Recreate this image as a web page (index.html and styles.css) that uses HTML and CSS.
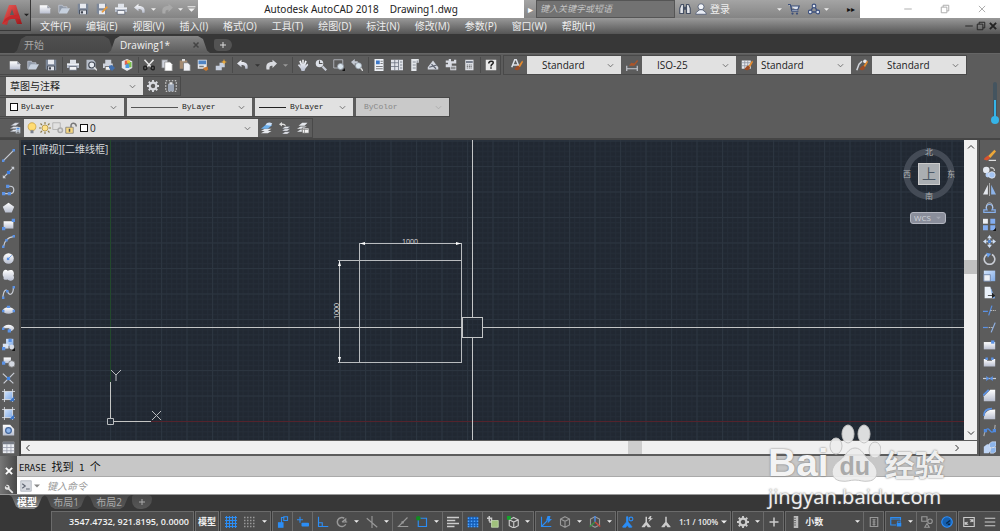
FILE: index.html
```html
<!DOCTYPE html>
<html lang="zh-CN">
<head>
<meta charset="utf-8">
<title>Autodesk AutoCAD 2018 Drawing1.dwg</title>
<link rel="stylesheet" href="styles.css">
</head>
<body>
<svg class="sprite" aria-hidden="true">
  <defs>
    <linearGradient id="silver" x1="0" y1="0" x2="0" y2="1"><stop offset="0" stop-color="#fff"/><stop offset="1" stop-color="#b9bfd0"/></linearGradient>
    <linearGradient id="red" x1="0" y1="0" x2="1" y2="1"><stop offset="0" stop-color="#f0605a"/><stop offset="1" stop-color="#9c1418"/></linearGradient>
    <linearGradient id="blue" x1="0" y1="0" x2="1" y2="1"><stop offset="0" stop-color="#d3e4fb"/><stop offset="1" stop-color="#7fa9e4"/></linearGradient>
  </defs>
  <symbol id="new" viewBox="0 0 16 16"><path d="M1 3h10l4 4v7H1z" fill="url(#silver)"/><path d="M11 3v4h4z" fill="#9aa0ac"/></symbol>
  <symbol id="open" viewBox="0 0 16 16"><path d="M1 13V3h5l1 2h5v2" fill="#8f99a8" stroke="#c4cad6"/><path d="M1 14 5 7h11l-4 7z" fill="#c6d0de"/></symbol>
  <symbol id="save" viewBox="0 0 16 16"><path d="M1 1h14v14H3l-2-2z" fill="#7c8799"/><path d="M4 1h8v6H4z" fill="#e8eaf0"/><path d="M3 9h10v6H3z" fill="#3c424e"/><path d="M4 10h8v5H4z" fill="#dfe2e9"/><path d="M5 11h3v3H5z" fill="#3c424e"/></symbol>
  <symbol id="saveas" viewBox="0 0 16 16"><path d="M1 1h13v14H3l-2-2z" fill="#7c8799"/><path d="M4 1h8v6H4zM4 10h8v5H4z" fill="#e8eaf0"/><path d="m7 12 7-8 2 2-7 7z" fill="#e79a3c"/></symbol>
  <symbol id="print" viewBox="0 0 16 16"><path d="M4 1h8v6H4z" fill="#dfe3ea"/><path d="M0 6h16v6H0z" fill="#b9c0cd"/><path d="M0 6h16v2H0z" fill="#eef0f5"/><path d="M3 10h10v5H3z" fill="#f4f5f8" stroke="#596070"/></symbol>
  <symbol id="undo" viewBox="0 0 16 16"><path d="m0 6 6-5v3c7 0 9 3 8 9h-3c0-4-1-5-5-5v3z" fill="url(#silver)"/></symbol>
  <symbol id="redo" viewBox="0 0 16 16"><path d="m16 6-6-5v3C3 4 1 7 2 14h4c0-4 0-5 4-5v3z" fill="currentColor"/></symbol>
  <symbol id="down" viewBox="0 0 8 8"><path d="M0 2h8L4 6z" fill="currentColor"/></symbol>
  <symbol id="custom" viewBox="0 0 16 16"><path d="M1 3h14v2H1zM2 7h12l-6 6z" fill="#eee"/></symbol>
  <symbol id="preview" viewBox="0 0 16 16"><path d="M2 1h9l3 3v10H2z" fill="#b9c0cc"/><circle cx="9" cy="8" r="4" fill="#e7ebf1" stroke="#424854" stroke-width="1.5"/><path d="m12 11 4 4" stroke="#e6e6e6" stroke-width="2"/></symbol>
  <symbol id="publish" viewBox="0 0 16 16"><path d="M3 1h8v5H3zM0 6h13v6H0z" fill="#cfd4de"/><path d="M3 10h7v5H3z" fill="#f3f3f3" stroke="#555"/><path d="m8 9 4-1 4 4-4 4-4-4z" fill="#426fae"/></symbol>
  <symbol id="globe" viewBox="0 0 16 16"><path d="M1 3 8 0l7 3v9l-7 4-7-4z" fill="#e4e6eb"/><path d="M5 2h6v6H5z" fill="#e2604c"/><path d="M9 4h5v7H9z" fill="#7ac04e"/><path d="M6 7h5v5H6z" fill="#4b9be0"/><path d="M8 2h4v3H8z" fill="#f0c23c"/></symbol>
  <symbol id="cut" viewBox="0 0 16 16"><path d="m2 1 9 10M14 1 5 11" stroke="#e9e9e9" stroke-width="2"/><circle cx="3" cy="12" r="2.300" fill="none" stroke="#222" stroke-width="2"/><circle cx="13" cy="12" r="2.300" fill="none" stroke="#222" stroke-width="2"/></symbol>
  <symbol id="copy" viewBox="0 0 16 16"><path d="M1 1h8v11H1z" fill="#cfd3dc" stroke="#777"/><path d="M5 4h7l3 3v9H5z" fill="#fff" stroke="#888"/></symbol>
  <symbol id="paste" viewBox="0 0 16 16"><path d="M1 2h10v11H1z" fill="#a68c72"/><path d="M4 0h4v3H4z" fill="#ddd"/><path d="M6 5h6l3 3v8H6z" fill="#f0f1f5" stroke="#777"/></symbol>
  <symbol id="match" viewBox="0 0 16 16"><path d="M1 1h12v12H1z" fill="#e5e7ec"/><path d="M2 2h10v5H2z" fill="#4f84c4"/><path d="M3 9h6v2H3z" fill="#777"/><path d="m8 12 6-2 1 4-3 2-3-2z" fill="#c77a32"/></symbol>
  <symbol id="block" viewBox="0 0 16 16"><path d="M1 9h8v6H1zM6 5h7v6H6z" fill="#c6cfdf"/><path d="m12 0 1 3 3 1-3 1-1 3-1-3-3-1 3-1z" fill="#f0ac38"/></symbol>
  <symbol id="pan" viewBox="0 0 16 16"><path d="m1 8 2-1 2 2L3 3l2-1 2 5V1h2v6l2-5 2 1-2 6 3-3 1 2-4 5-1 3H6l-1-3z" fill="url(#silver)"/></symbol>
  <symbol id="zoomrt" viewBox="0 0 16 16"><circle cx="6" cy="6" r="5" fill="#dde1e8"/><path d="M6 2v4h4" stroke="#555" stroke-width="1.500" fill="none"/><path d="m10 10 5 5" stroke="#c9ced9" stroke-width="3"/></symbol>
  <symbol id="zoomwin" viewBox="0 0 16 16"><path d="M1 1h12v11H1z" fill="none" stroke="#c3c7cf"/><circle cx="10" cy="10" r="4" fill="#d9e4ec" stroke="#8b929f"/><path d="M16 12v4h-4z" fill="#111"/></symbol>
  <symbol id="zoomprev" viewBox="0 0 16 16"><path d="m0 4 5-4v3h4v3H5v3z" fill="#c2c7d1"/><circle cx="10" cy="9" r="4" fill="#dae6ee" stroke="#9aa2ae"/><path d="m13 12 3 4" stroke="#d8d8d8" stroke-width="2"/></symbol>
  <symbol id="props" viewBox="0 0 16 16"><path d="M2 0h12v16H2z" fill="#edf0f5"/><path d="M4 2h5v5H4z" fill="#3d78c8"/><path d="M10 3h3M10 6h3M4 10h9M4 13h9" stroke="#555"/></symbol>
  <symbol id="design" viewBox="0 0 16 16"><path d="M0 1h16v14H0z" fill="#dfe2e8"/><path d="M5 1v14M10 1v14M0 5h10M0 10h10M12 4h3M12 8h3M12 12h3" stroke="#646b79"/></symbol>
  <symbol id="palette" viewBox="0 0 16 16"><path d="M3 0h10v5h-3v11H3z" fill="#e3e6ea"/><path d="M5 4h4M5 8h4M5 12h4M11 2v3" stroke="#6a6f79"/></symbol>
  <symbol id="sheet" viewBox="0 0 16 16"><path d="m1 11 7-9 3 4 4 5v3H1z" fill="#d2d6df"/><path d="m3 11 10-3M6 7l6 6" stroke="#5b616e" stroke-width="1.500"/></symbol>
  <symbol id="markup" viewBox="0 0 16 16"><path d="M1 2h4V0h3v3h4V1h3v5H9v3h6v6H7v-4H1V7h3V5H1z" fill="#d9dce4"/><path d="M8 11h6M8 13h6" stroke="#555"/></symbol>
  <symbol id="calc" viewBox="0 0 16 16"><path d="M3 1h11v14H3z" fill="#dcdfe5"/><path d="M4 3h9v2H4z" fill="#596070"/><path d="M5 8h7M5 10h7M5 12h7" stroke="#555" stroke-dasharray="2 1"/></symbol>
  <symbol id="help" viewBox="0 0 16 16"><path d="M1 1h14v14H1z" fill="#e8e8e8"/><path d="M5 6c0-4 6-4 6-1 0 2-3 2-3 5" fill="none" stroke="#222" stroke-width="2"/><path d="M7 11h2v2H7z" fill="#222"/></symbol>
  <symbol id="brush" viewBox="0 0 16 16"><path d="m10 9 5-7 1 2-4 7z" fill="#e58a2c"/><path d="M5 12c2 0 2-4 5-3l2 2c0 4-4 5-7 3z" fill="#9c4c26"/></symbol>
  <symbol id="textstyle" viewBox="0 0 16 16"><path d="m1 11 4-10h2l4 10M3 8h6" fill="none" stroke="#dde1e8" stroke-width="2"/><use href="#brush"/></symbol>
  <symbol id="dimstyle" viewBox="0 0 16 16"><path d="M1 9v7M15 9v7M1 13h14" stroke="#c8ccd4" stroke-width="1.500"/><path d="m4 9 3-4 4 1 4-5 1 2-5 6z" fill="#ab552a"/></symbol>
  <symbol id="tablestyle" viewBox="0 0 16 16"><path d="M1 2h12v11H1z" fill="#e7e9ee"/><path d="M5 2v11M9 2v11M1 5h12M1 9h12" stroke="#8a8f9b"/><use href="#brush"/></symbol>
  <symbol id="leaderstyle" viewBox="0 0 16 16"><path d="m1 15 3-8 4-4" fill="none" stroke="#cfd3da" stroke-width="2"/><circle cx="12" cy="3" r="2.500" fill="#e6e8ed"/><use href="#brush"/></symbol>
  <symbol id="gear" viewBox="0 0 16 16"><circle cx="8" cy="8" r="4.500" fill="none" stroke="currentColor" stroke-width="3"/><path d="M8 0v3M8 13v3M0 8h3M13 8h3M2.300 2.300l2 2M11.700 11.700l2 2M2.300 13.700l2-2M11.700 4.300l2-2" stroke="currentColor" stroke-width="2.500"/></symbol>
  <symbol id="wsave" viewBox="0 0 16 16"><path d="M1 1h14v14H1z" fill="none" stroke="#ddd" stroke-width="1.500" stroke-dasharray="2 2"/><path d="M4 5h8v10H4z" fill="#9ba5b5"/><path d="M6 3h4v3H6z" fill="#e5e5e5"/></symbol>
  <symbol id="layers" viewBox="0 0 16 16"><path d="m2 5 6-4h6l-5 4zM1 9l5-3h7l-5 3zM1 13l5-3h7l-5 3z" fill="#e1e4ea" stroke="#5a5f69" stroke-width=".5"/><path d="M9 7h6v8H9z" fill="#dce8f7"/><path d="M10 8h4v2h-4z" fill="#4e8edb"/><path d="M10 12h4M10 14h4" stroke="#555"/></symbol>
  <symbol id="laycur" viewBox="0 0 16 16"><path d="m0 15 5-3h9l-5 3zM0 12l5-3h9l-5 3z" fill="#e5e8ed"/><path d="m0 9 6-5h9l-6 5z" fill="#6eb0ec"/><path d="M6 4c2-4 6-4 9-2l-2 3z" fill="#cce0f8"/></symbol>
  <symbol id="layprev" viewBox="0 0 16 16"><path d="m0 3 4-3v2c4 0 5 1 5 4C7 4 6 4 4 4v2z" fill="#ddd"/><path d="m4 9 4-3h7l-4 3zM4 12l4-3h7l-4 3zM4 16l4-3h7l-4 3z" fill="#e9ebef" stroke="#4f545e" stroke-width=".5"/></symbol>
  <symbol id="laystate" viewBox="0 0 16 16"><path d="m2 5 5-4h7l-4 4zM0 9l5-3h8l-5 3zM0 13l5-3h8l-5 3z" fill="#e4e7ec"/><path d="M7 8h9v7H7z" fill="#f2f2f2" stroke="#555"/><path d="M8 10h7M10 9v6" stroke="#888"/></symbol>
  <symbol id="bulb" viewBox="0 0 16 16"><path d="M5 11C1 7 3 1 8 1s7 6 3 10z" fill="#ffdc73" stroke="#c79b35"/><path d="M6 11h4v4H6z" fill="#7b8291"/></symbol>
  <symbol id="sun" viewBox="0 0 16 16"><circle cx="8" cy="8" r="4" fill="#ffe28a" stroke="#a98b3d"/><path d="M8 0v3M8 13v3M0 8h3M13 8h3M2 2l2 2M12 12l2 2M2 14l2-2M12 4l2-2" stroke="#8b7a4b" stroke-width="1.500"/></symbol>
  <symbol id="vpfreeze" viewBox="0 0 16 16"><path d="M1 1h10v9H1z" fill="none" stroke="#aaa"/><circle cx="11" cy="11" r="3" fill="#ddd" stroke="#aaa" stroke-width="2"/></symbol>
  <symbol id="unlock" viewBox="0 0 16 16"><path d="M8 8V5c0-5 7-4 7 1" fill="none" stroke="#777" stroke-width="2"/><path d="M1 7h10v8H1z" fill="#f6d781" stroke="#777"/><path d="M6 9v4" stroke="#555" stroke-width="2"/></symbol>
  <symbol id="binoc" viewBox="0 0 16 16"><path d="M1 14V7l2-5h3v12zM15 14V7l-2-5h-3v12z" fill="#e3e5ea" stroke="#465064" stroke-width="1.500"/><path d="M6 5h4v4H6z" fill="#465064"/></symbol>
  <symbol id="user" viewBox="0 0 16 16"><circle cx="8" cy="5" r="4" fill="#f4f6fa" stroke="#46526b"/><path d="M1 15c0-4 3-3 5-6h4c2 3 5 2 5 6z" fill="#e9edf5" stroke="#46526b"/></symbol>
  <symbol id="cart" viewBox="0 0 16 16"><path d="M0 2h3l2 9h9M4 4h11l-2 5H5z" fill="#dce3ef" stroke="#3b4e79" stroke-width="1.500"/><circle cx="6" cy="14" r="1.500" fill="#3b4e79"/><circle cx="12" cy="14" r="1.500" fill="#3b4e79"/></symbol>
  <symbol id="a360" viewBox="0 0 16 16"><path d="M8 3 3 12h10z" fill="none" stroke="#3f527f" stroke-width="2"/><g fill="#dfe6f2" stroke="#3f527f" stroke-width="1.500"><circle cx="8" cy="4" r="2.500"/><circle cx="3" cy="12" r="2.500"/><circle cx="13" cy="12" r="2.500"/></g></symbol>
  <symbol id="min" viewBox="0 0 16 16"><path d="M2 8h12" stroke="currentColor" stroke-width="1.500"/></symbol>
  <symbol id="restore" viewBox="0 0 16 16"><path d="M2 5h9v9H2zM5 5V2h9v9h-3" fill="none" stroke="currentColor" stroke-width="1.500"/></symbol>
  <symbol id="close" viewBox="0 0 16 16"><path d="m3 3 10 10M13 3 3 13" stroke="currentColor" stroke-width="1.500"/></symbol>
  <symbol id="closeb" viewBox="0 0 16 16"><path d="m3 3 10 10M13 3 3 13" stroke="currentColor" stroke-width="3"/></symbol>
  <symbol id="plus" viewBox="0 0 16 16"><path d="M8 2v12M2 8h12" stroke="currentColor" stroke-width="2"/></symbol>
  <symbol id="chev" viewBox="0 0 16 16"><path d="m2 5 6 6 6-6" fill="none" stroke="currentColor" stroke-width="2"/></symbol>
  <symbol id="line" viewBox="0 0 16 16"><path d="M2 14 14 2" stroke="#c9cdd5" stroke-width="1.500"/><path d="M0 13h3v3H0zM13 0h3v3h-3z" fill="#5b92e5"/></symbol>
  <symbol id="xline" viewBox="0 0 16 16"><path d="M2 14 14 2" stroke="#c9cdd5" stroke-width="1.500"/><path d="M6 6h4v4H6z" fill="#3f82e8"/><path d="M11 1h4v4zM1 11v4h4z" fill="#c9cdd5"/></symbol>
  <symbol id="pline" viewBox="0 0 16 16"><path d="M2 13h8c6 0 6-9 0-9H5" fill="none" stroke="#c9cdd5" stroke-width="1.500"/><path d="M0 11h4v4H0zM7 11h4v4H7zM5 2h4v4H5z" fill="#5b92e5"/></symbol>
  <symbol id="polygon" viewBox="0 0 16 16"><path d="m8 2 7 5-3 7H4L1 7z" fill="url(#silver)"/></symbol>
  <symbol id="rect" viewBox="0 0 16 16"><path d="M2 4h12v9H2z" fill="url(#silver)"/><path d="M0 11h4v4H0zM12 1h4v4h-4z" fill="#5b92e5"/></symbol>
  <symbol id="arc" viewBox="0 0 16 16"><path d="M2 14C3 7 7 3 14 2" fill="none" stroke="#c9cdd5" stroke-width="1.500"/><path d="M0 13h3v3H0zM4 5h3v3H4zM13 0h3v3h-3z" fill="#5b92e5"/></symbol>
  <symbol id="circle" viewBox="0 0 16 16"><circle cx="8" cy="8" r="6.500" fill="url(#silver)"/><path d="m8 8 4-4" stroke="#5b92e5"/><path d="M6 7h3v3H6z" fill="#5b92e5"/></symbol>
  <symbol id="revcloud" viewBox="0 0 16 16"><path d="M2 2c2-2 4-1 5 0 3-1 6-1 7 1 1 2 1 4 0 5 2 3 0 6-2 6-2 1-4 0-5-1-3 1-6 0-5-3-2-3-1-6 0-8z" fill="url(#silver)"/></symbol>
  <symbol id="spline" viewBox="0 0 16 16"><path d="M1 14C2 5 5 3 7 7c2 6 7 3 7-5" fill="none" stroke="#c9cdd5" stroke-width="1.500"/><path d="M0 13h3v3H0zM5 5h3v3H5zM13 0h3v3h-3z" fill="#5b92e5"/></symbol>
  <symbol id="ellipse" viewBox="0 0 16 16"><ellipse cx="8" cy="8" rx="7" ry="4" fill="url(#silver)"/><path d="M0 7h3v3H0zM6 2h4v3H6zM13 7h3v3h-3z" fill="#5b92e5"/></symbol>
  <symbol id="ellarc" viewBox="0 0 16 16"><path d="M1 9c1-6 13-6 14 0-1 3-4 4-6 4V9z" fill="url(#silver)"/><path d="M0 8h3v3H0zM7 10h4v4H7z" fill="#5b92e5"/></symbol>
  <symbol id="insert" viewBox="0 0 16 16"><path d="M5 1h9v9H5z" fill="url(#blue)"/><circle cx="12" cy="11" r="3" fill="#d7dce6"/><path d="M1 7h7v6H1z" fill="#dce4f1"/><path d="M0 11h4v4H0zM8 1h4v4H8z" fill="#5b92e5"/><path d="M16 12v4h-4z" fill="#111"/></symbol>
  <symbol id="makeblk" viewBox="0 0 16 16"><path d="M2 3h9v7H2z" fill="url(#silver)"/><circle cx="12" cy="11" r="4" fill="#d5d9e2" stroke="#777"/><path d="M0 8h4v4H0z" fill="#5b92e5"/></symbol>
  <symbol id="point" viewBox="0 0 16 16"><path d="M2 14 15 1M1 2l13 12" stroke="#c9cdd5" stroke-width="1.500"/><path d="M6 6h4v4H6z" fill="#4587e4"/></symbol>
  <symbol id="hatch" viewBox="0 0 16 16"><path d="M3 3h10v10H3z" fill="url(#blue)"/><path d="M0 3h16M0 13h16M3 0v16M13 0v16" stroke="#e0e4eb"/><path d="m9 15 6-6v6z" fill="#3b73c4"/></symbol>
  <symbol id="region" viewBox="0 0 16 16"><path d="M1 1h9l5 5v8H1z" fill="url(#silver)"/><circle cx="8" cy="8" r="3.500" fill="#8eb5ea" stroke="#43669b" stroke-width="1.500"/></symbol>
  <symbol id="table" viewBox="0 0 16 16"><path d="M1 1h14v14H1z" fill="#eceef3"/><path d="M1 1h14v3H1z" fill="#777c86"/><path d="M6 4v11M11 4v11M1 8h14M1 12h14" stroke="#989dab"/></symbol>
  <symbol id="erase" viewBox="0 0 16 16"><path d="m6 9 8-8 2 2-7 8z" fill="#eda839"/><path d="m2 11 4-3 3 3-4 3-4-1z" fill="#d9532f"/><path d="M7 14h9" stroke="#ddd" stroke-width="1.500"/></symbol>
  <symbol id="mcopy" viewBox="0 0 16 16"><circle cx="4" cy="5" r="4" fill="#e5e9f0"/><circle cx="6" cy="11" r="3" fill="#b7cff2"/><circle cx="11" cy="11" r="4" fill="#a4c4f2" stroke="#e4e8ef"/><path d="M9 2c4 0 5 1 5 4" fill="none" stroke="#ddd" stroke-width="1.500"/></symbol>
  <symbol id="mirror" viewBox="0 0 16 16"><path d="M6 2v12H0z" fill="#e4e7ed"/><path d="M10 2v12h6z" fill="#8db3e8"/><path d="M8 0v16" stroke="#bbb"/></symbol>
  <symbol id="offset" viewBox="0 0 16 16"><path d="M1 14v-3h4C0 2 16 2 11 11h4v3z" fill="none" stroke="#86afeb" stroke-width="1.500"/><path d="M4 9C3 0 13 0 12 9" fill="none" stroke="#cbd3df"/></symbol>
  <symbol id="array" viewBox="0 0 16 16"><path d="M0 1h6v6H0z" fill="#eef0f4"/><path d="M9 1h6v6H9zM0 9h6v6H0zM9 9h6v6H9z" fill="#83adf0"/><path d="M16 12v4h-4z" fill="#111"/></symbol>
  <symbol id="move" viewBox="0 0 16 16"><path d="m8 0 3 4H5zM8 16l3-4H5zM0 8l4-3v6zM16 8l-4-3v6z" fill="#cfe0f7"/><path d="M8 4v8M4 8h8" stroke="#c9ced8" stroke-width="2"/><path d="M6 6h4v4H6z" fill="#4c7fc7"/></symbol>
  <symbol id="rotate" viewBox="0 0 16 16"><path d="M5 3a6.500 6.500 0 1 0 6 0" fill="none" stroke="#c9cdd5" stroke-width="2"/><path d="m4 1 6 1-4 5z" fill="#67a0ef"/></symbol>
  <symbol id="scale" viewBox="0 0 16 16"><path d="M1 2h14v13H1z" fill="url(#blue)"/><path d="M1 7h8v8H1z" fill="#eef0f5" stroke="#667ba1"/></symbol>
  <symbol id="stretch" viewBox="0 0 16 16"><path d="M2 1h7l5 14H2z" fill="#eaf1fa"/><path d="m9 1 6 14h-3z" fill="#78a9e9"/><path d="M6 11h5V8l4 4-4 3v-3H6z" fill="#222"/></symbol>
  <symbol id="trim" viewBox="0 0 16 16"><path d="M7 14 11 2M0 9h6" stroke="#5b92e5" stroke-width="1.500"/><path d="M9 8h7" stroke="#ccc" stroke-dasharray="2 1"/></symbol>
  <symbol id="extend" viewBox="0 0 16 16"><path d="m10 14 5-12" stroke="#8fb1e4" stroke-width="1.500"/><path d="M0 8h6" stroke="#5b92e5" stroke-width="1.500"/><path d="M7 8h5" stroke="#ccc" stroke-dasharray="2 1"/></symbol>
  <symbol id="breakpt" viewBox="0 0 16 16"><path d="M1 5h14v9H1z" fill="url(#silver)"/><path d="M10 3h4v4h-4z" fill="#5b92e5"/></symbol>
  <symbol id="break" viewBox="0 0 16 16"><path d="M1 5h4v2h6V5h4v9H1z" fill="url(#silver)"/><path d="M3 3h3v3H3zM10 3h3v3h-3z" fill="#5b92e5"/></symbol>
  <symbol id="join" viewBox="0 0 16 16"><path d="M0 8h16" stroke="#c9cdd5" stroke-width="1.500"/><path d="m4 5 4 3-4 3zM12 5 8 8l4 3z" fill="#5b92e5"/></symbol>
  <symbol id="chamfer" viewBox="0 0 16 16"><path d="m1 9 8-8h6v14H1z" fill="url(#silver)"/><path d="m0 8 7-7" stroke="#5b92e5" stroke-width="2"/></symbol>
  <symbol id="fillet" viewBox="0 0 16 16"><path d="M1 15c0-8 4-12 14-12v12z" fill="url(#silver)"/><path d="M1 11c0-6 4-9 10-9" fill="none" stroke="#5b92e5" stroke-width="2"/></symbol>
  <symbol id="blend" viewBox="0 0 16 16"><path d="M1 15 3 7M14 8l1-7" stroke="#aaa" stroke-width="1.500"/><path d="M3 8c5-7 6 7 11 0" fill="none" stroke="#4f8ae0" stroke-width="1.500"/><path d="M1 6h4v4H1zM12 6h4v4h-4z" fill="#4f8ae0"/></symbol>
  <symbol id="explode" viewBox="0 0 16 16"><path d="m1 7 4-3h5v7l-3 4H1z" fill="#bfd5f5"/><path d="m8 3 3-2h5v5l-3 2H8zM9 10l3-2h4v5l-3 2H9z" fill="#8cb4ea" stroke="#e2ebf8" stroke-width=".7"/></symbol>
  <symbol id="wrench" viewBox="0 0 16 16"><path d="M3 2c3-2 7 1 6 5l6 6-2 2-6-6C3 10 0 7 2 3l3 3 2-2z" fill="#e5e5e5"/></symbol>
  <symbol id="prompt" viewBox="0 0 16 16"><path d="M1 1h14v14H1z" fill="#d7dae0" stroke="#a8adb6"/><path d="m3 5 4 3-4 3M8 12h5" fill="none" stroke="#5e6571" stroke-width="1.500"/></symbol>
  <symbol id="sgrid" viewBox="0 0 16 16"><path d="M2 0v16M6 0v16M10 0v16M14 0v16M0 2h16M0 6h16M0 10h16M0 14h16" stroke="currentColor" stroke-width="1.500"/></symbol>
  <symbol id="sdots" viewBox="0 0 16 16"><path d="M0 2h16M0 6h16M0 10h16M0 14h16" stroke="currentColor" stroke-width="2" stroke-dasharray="2 2"/></symbol>
  <symbol id="infer" viewBox="0 0 16 16"><path d="M2 9h6v6H2zM9 1h5v5H9zM6 9V2h4" fill="none" stroke="currentColor" stroke-width="1.500"/><path d="M2 9h6v6H2z" fill="currentColor"/></symbol>
  <symbol id="dyn" viewBox="0 0 16 16"><path d="M4 1v8M0 5h8" stroke="currentColor" stroke-width="1.500"/><rect x="6" y="9" width="10" height="5" rx="1" fill="currentColor"/></symbol>
  <symbol id="ortho" viewBox="0 0 16 16"><path d="M2 1v13h13M2 9h5v5" fill="none" stroke="currentColor" stroke-width="1.500"/></symbol>
  <symbol id="polar" viewBox="0 0 16 16"><path d="M13 11A6 6 0 1 1 11 3" fill="none" stroke="currentColor" stroke-width="2"/><path d="M8 8h7M8 8l5-4v4" fill="none" stroke="currentColor" stroke-width="1.500"/></symbol>
  <symbol id="iso" viewBox="0 0 16 16"><path d="m1 3 14 12M8 0v16" stroke="currentColor" stroke-width="1.500"/></symbol>
  <symbol id="otrack" viewBox="0 0 16 16"><path d="M15 14H2L14 2" fill="none" stroke="currentColor" stroke-width="1.500"/><path d="M6 7h3v3H6z" fill="currentColor"/></symbol>
  <symbol id="osnap" viewBox="0 0 16 16"><path d="M3 3h11v11H3z" fill="none" stroke="currentColor" stroke-width="1.500"/><circle cx="3" cy="3" r="3" fill="#108c20"/></symbol>
  <symbol id="lwt" viewBox="0 0 16 16"><path d="M0 2h16M0 6h11M0 10h16M0 14h10" stroke="currentColor" stroke-width="2"/></symbol>
  <symbol id="trans" viewBox="0 0 16 16"><path d="M1 1h14v14H1z" fill="#155cb4"/><path d="M1 3h14M1 7h14M1 11h14M1 14h14" stroke="#4da2ff" stroke-width="2" stroke-dasharray="2 2"/></symbol>
  <symbol id="cycle" viewBox="0 0 16 16"><path d="M0 3h7M3 0v7M6 3v5H3" fill="none" stroke="#ccc" stroke-width="2"/><path d="M6 6h9v9H6z" fill="#a0c17c" stroke="#c8ddb5"/></symbol>
  <symbol id="cube" viewBox="0 0 16 16"><path d="m8 1 6 3v8l-6 3-6-3V4zM2 4l6 3 6-3M8 7v8" fill="none" stroke="currentColor" stroke-width="1.500"/></symbol>
  <symbol id="cubesnap" viewBox="0 0 16 16"><path d="m9 2 6 3v8l-6 3-6-3V5zM3 5l6 3 6-3M9 8v8" fill="none" stroke="#ccc" stroke-width="1.500"/><path d="M0 0h5v5H0z" fill="#13a42b"/></symbol>
  <symbol id="ducs" viewBox="0 0 16 16"><path d="M2 1v13h13M2 14l8-8" fill="none" stroke="currentColor" stroke-width="1.500"/><path d="m10 0-2 6h3l-1 4 6-6h-3l1-4z" fill="currentColor"/></symbol>
  <symbol id="gizmo" viewBox="0 0 16 16"><path d="m8 1 6 3v8l-6 3-6-3V4z" fill="none" stroke="#999" stroke-width="1.500"/><path d="M8 0v8" stroke="#4b88e0" stroke-width="2"/><path d="m8 8-7 6" stroke="#3c9244" stroke-width="2"/><path d="m8 8 7 6" stroke="#cb493c" stroke-width="2"/></symbol>
  <symbol id="ann" viewBox="0 0 16 16"><path d="M7 1h2v7l5 6v1h-4l-2-3-2 3H2v-1l5-6z" fill="currentColor"/></symbol>
  <symbol id="annvis" viewBox="0 0 16 16"><path d="M6 1h2v7l5 6v1H9l-2-3-2 3H1v-1l5-6z" fill="currentColor" stroke="currentColor"/><circle cx="12" cy="4" r="2.500" fill="none" stroke="currentColor" stroke-width="1.500"/></symbol>
  <symbol id="annauto" viewBox="0 0 16 16"><path d="M6 1h2v7l5 6v1H9l-2-3-2 3H1v-1l5-6z" fill="currentColor"/><path d="m12 0-3 4h3l-2 4 6-5h-3l1-3z" fill="currentColor"/></symbol>
  <symbol id="ruler" viewBox="0 0 16 16"><path d="M5 0h6v16H5z" fill="#bbb"/><path d="M5 3h3M5 6h3M5 9h3M5 12h3" stroke="#555"/></symbol>
  <symbol id="quick" viewBox="0 0 16 16"><path d="M3 2h10v12H3zM6 5h4M6 8h4M6 11h4M8 5v8" fill="none" stroke="currentColor" stroke-width="1.500"/></symbol>
  <symbol id="lockui" viewBox="0 0 16 16"><path d="M8 12H1V2h13v4M1 4h13" fill="none" stroke="currentColor" stroke-width="1.500"/><path d="M9 9h6v5H9z" fill="currentColor"/><path d="M10 9V7h4v2" fill="none" stroke="currentColor"/></symbol>
  <symbol id="isolate" viewBox="0 0 16 16"><path d="M1 1h7v6H1zM5 15l3-5 3 5z" fill="none" stroke="currentColor" stroke-width="1.500"/><circle cx="12" cy="7" r="3" fill="none" stroke="currentColor" stroke-width="1.500"/></symbol>
  <symbol id="perf" viewBox="0 0 16 16"><circle cx="8" cy="8" r="7" fill="#155fae" stroke="#2e91ff" stroke-width="1.500"/><path d="m7 10 5-4M9 11h3" stroke="#06294e" stroke-width="2"/></symbol>
  <symbol id="clean" viewBox="0 0 16 16"><path d="M1 2h14v12H1zM9 5h4v3M7 11H3V8M3 11l3-3M13 5l-3 3" fill="none" stroke="currentColor" stroke-width="1.500"/></symbol>
  <symbol id="menu" viewBox="0 0 16 16"><path d="M1 3h14M1 8h14M1 13h14" stroke="currentColor" stroke-width="1.500"/></symbol>
</svg>

<header class="head">
  <button class="logo" aria-label="应用程序菜单">
    <svg class="logo-a" viewBox="0 0 20 22"><path d="M0 20 7 1h7l6 19h-5l-2-5H7l-2 6z" fill="url(#red)"/><path d="m8 11 2-6 2 6z" fill="#5d5d5d"/><path d="M3 15c5-4 9-4 14-4l1 4C12 13 7 15 0 20z" fill="#c6282c"/></svg>
    <svg class="s6"><use href="#down"/></svg>
  </button>
  <div class="titlebar">
    <div class="quick">
      <button aria-label="新建"><svg><use href="#new"/></svg></button>
      <button aria-label="打开"><svg><use href="#open"/></svg></button>
      <button aria-label="保存"><svg><use href="#save"/></svg></button>
      <button aria-label="另存为"><svg><use href="#saveas"/></svg></button>
      <button aria-label="打印"><svg><use href="#print"/></svg></button>
      <button aria-label="放弃"><svg><use href="#undo"/></svg></button>
      <button class="drop" aria-label="放弃列表"><svg><use href="#down"/></svg></button>
      <button class="dim" aria-label="重做"><svg><use href="#redo"/></svg></button>
      <button class="drop" aria-label="重做列表"><svg><use href="#down"/></svg></button>
      <button class="tail" aria-label="自定义"><svg><use href="#custom"/></svg></button>
    </div>
    <h1 class="title"><span>Autodesk AutoCAD 2018</span><span>Drawing1.dwg</span></h1>
    <div class="info">
      <button class="expand" aria-label="展开搜索">▸</button>
      <input class="search" type="text" aria-label="搜索" placeholder="键入关键字或短语">
      <button class="ico" aria-label="搜索帮助"><svg><use href="#binoc"/></svg></button>
      <button class="login"><svg><use href="#user"/></svg>登录</button>
      <button class="drop" aria-label="登录选项"><svg><use href="#down"/></svg></button>
      <button class="ico" aria-label="应用商店"><svg><use href="#cart"/></svg></button>
      <button class="ico" aria-label="A360"><svg><use href="#a360"/></svg></button>
      <button class="drop near" aria-label="A360 选项"><svg><use href="#down"/></svg></button>
      <button class="more" aria-label="更多">▸▸</button>
    </div>
    <div class="winctl">
      <button aria-label="最小化"><svg><use href="#min"/></svg></button>
      <button aria-label="还原"><svg><use href="#restore"/></svg></button>
      <button aria-label="关闭"><svg><use href="#close"/></svg></button>
    </div>
  </div>
  <nav class="menubar">
    <a href="#file">文件(F)</a><a href="#edit">编辑(E)</a><a href="#view">视图(V)</a><a href="#ins">插入(I)</a><a href="#format">格式(O)</a><a href="#tools">工具(T)</a><a href="#draw">绘图(D)</a><a href="#dim">标注(N)</a><a href="#modify">修改(M)</a><a href="#param">参数(P)</a><a href="#window">窗口(W)</a><a href="#helpmenu">帮助(H)</a>
    <div class="docctl">
      <button aria-label="最小化图形"><svg><use href="#min"/></svg></button>
      <button aria-label="还原图形"><svg><use href="#restore"/></svg></button>
      <button aria-label="关闭图形"><svg><use href="#closeb"/></svg></button>
    </div>
  </nav>
</header>

<div class="filetabs">
  <button class="ftab">开始</button>
  <button class="ftab on">Drawing1*<svg class="s8"><use href="#closeb"/></svg></button>
  <button class="fadd" aria-label="新图形"><svg class="s8"><use href="#plus"/></svg></button>
</div>

<div class="bars">
  <div class="barrow">
    <div class="bar std">
      <button aria-label="新建"><svg><use href="#new"/></svg></button><button aria-label="打开"><svg><use href="#open"/></svg></button><button aria-label="保存"><svg><use href="#save"/></svg></button><i></i>
      <button aria-label="打印"><svg><use href="#print"/></svg></button><button aria-label="打印预览"><svg><use href="#preview"/></svg></button><button aria-label="发布"><svg><use href="#publish"/></svg></button><button aria-label="三维打印"><svg><use href="#globe"/></svg></button><i></i>
      <button aria-label="剪切"><svg><use href="#cut"/></svg></button><button aria-label="复制"><svg><use href="#copy"/></svg></button><button aria-label="粘贴"><svg><use href="#paste"/></svg></button><button aria-label="特性匹配"><svg><use href="#match"/></svg></button><button aria-label="块编辑器"><svg><use href="#block"/></svg></button><i></i>
      <button aria-label="放弃"><svg><use href="#undo"/></svg></button><button class="drop dark" aria-label="放弃列表"><svg><use href="#down"/></svg></button><button class="lite" aria-label="重做"><svg><use href="#redo"/></svg></button><button class="drop grey" aria-label="重做列表"><svg><use href="#down"/></svg></button><i></i>
      <button aria-label="平移"><svg><use href="#pan"/></svg></button><button aria-label="实时缩放"><svg><use href="#zoomrt"/></svg></button><button aria-label="窗口缩放"><svg><use href="#zoomwin"/></svg></button><button aria-label="缩放上一个"><svg><use href="#zoomprev"/></svg></button><i></i>
      <button aria-label="特性"><svg><use href="#props"/></svg></button><button aria-label="设计中心"><svg><use href="#design"/></svg></button><button aria-label="工具选项板"><svg><use href="#palette"/></svg></button><button aria-label="图纸集"><svg><use href="#sheet"/></svg></button><button aria-label="标记集"><svg><use href="#markup"/></svg></button><button aria-label="计算器"><svg><use href="#calc"/></svg></button><i></i>
      <button aria-label="帮助"><svg><use href="#help"/></svg></button>
    </div>
    <div class="bar styles">
      <button aria-label="文字样式"><svg><use href="#textstyle"/></svg></button>
      <span class="combo"><select class="ind" aria-label="文字样式"><option>Standard</option></select><svg><use href="#chev"/></svg></span>
      <button aria-label="标注样式"><svg><use href="#dimstyle"/></svg></button>
      <span class="combo"><select class="ind" aria-label="标注样式"><option>ISO-25</option></select><svg><use href="#chev"/></svg></span>
      <button aria-label="表格样式"><svg><use href="#tablestyle"/></svg></button>
      <span class="combo"><select aria-label="表格样式"><option>Standard</option></select><svg><use href="#chev"/></svg></span>
      <button aria-label="多重引线样式"><svg><use href="#leaderstyle"/></svg></button>
      <span class="combo"><select class="ind" aria-label="多重引线样式"><option>Standard</option></select><svg><use href="#chev"/></svg></span>
    </div>
  </div>
  <div class="barrow">
    <div class="bar">
      <span class="combo work"><select aria-label="工作空间"><option>草图与注释</option></select><svg><use href="#chev"/></svg></span>
      <button class="lite" aria-label="工作空间设置"><svg><use href="#gear"/></svg></button>
      <button aria-label="我的工作空间"><svg><use href="#wsave"/></svg></button>
    </div>
  </div>
  <div class="barrow">
    <div class="bar props">
      <span class="combo color"><b class="swatch"></b><select aria-label="颜色"><option>ByLayer</option></select><svg><use href="#chev"/></svg></span>
      <span class="combo ltype"><b class="rule"></b><select aria-label="线型"><option>ByLayer</option></select><svg><use href="#chev"/></svg></span>
      <span class="combo lweight"><b class="rule"></b><select aria-label="线宽"><option>ByLayer</option></select><svg><use href="#chev"/></svg></span>
      <span class="combo plot"><select aria-label="打印样式" disabled><option>ByColor</option></select><svg><use href="#chev"/></svg></span>
    </div>
  </div>
  <div class="barrow">
    <div class="bar">
      <button aria-label="图层特性"><svg><use href="#layers"/></svg></button>
      <span class="combo layer"><b class="flags"><svg><use href="#bulb"/></svg><svg><use href="#sun"/></svg><svg><use href="#vpfreeze"/></svg><svg><use href="#unlock"/></svg><b class="swatch"></b></b><select aria-label="图层"><option>0</option></select><svg><use href="#chev"/></svg></span>
      <button aria-label="置为当前图层"><svg><use href="#laycur"/></svg></button>
      <button aria-label="上一个图层"><svg><use href="#layprev"/></svg></button>
      <button aria-label="图层状态"><svg><use href="#laystate"/></svg></button>
    </div>
  </div>
  <svg class="thermo" viewBox="0 0 8 44"><rect x="2" y="1" width="4" height="36" rx="2" fill="#44545f"/><path d="M4 19v20" stroke="#35b4e8" stroke-width="2"/><circle cx="4" cy="39" r="4" fill="#35b4e8"/></svg>
</div>

<main class="work-area">
  <div class="side">
    <button aria-label="直线"><svg><use href="#line"/></svg></button><button aria-label="构造线"><svg><use href="#xline"/></svg></button><button aria-label="多段线"><svg><use href="#pline"/></svg></button><button aria-label="多边形"><svg><use href="#polygon"/></svg></button><button aria-label="矩形"><svg><use href="#rect"/></svg></button><button aria-label="圆弧"><svg><use href="#arc"/></svg></button><button aria-label="圆"><svg><use href="#circle"/></svg></button><button aria-label="修订云线"><svg><use href="#revcloud"/></svg></button><button aria-label="样条曲线"><svg><use href="#spline"/></svg></button><button aria-label="椭圆"><svg><use href="#ellipse"/></svg></button><button aria-label="椭圆弧"><svg><use href="#ellarc"/></svg></button><button aria-label="插入块"><svg><use href="#insert"/></svg></button><button aria-label="创建块"><svg><use href="#makeblk"/></svg></button><button aria-label="点"><svg><use href="#point"/></svg></button><button aria-label="图案填充"><svg><use href="#hatch"/></svg></button><button aria-label="渐变色"><svg><use href="#hatch"/></svg></button><button aria-label="面域"><svg><use href="#region"/></svg></button><button aria-label="表格"><svg><use href="#table"/></svg></button>
  </div>
  <section class="view">
    <div class="canvas">
      <svg class="drawing" aria-label="图形">
        <defs>
          <pattern id="minor" x="89" y="281" width="5.1" height="5.1" patternUnits="userSpaceOnUse"><path d="M0 .5h5.100M.5 0v5.100" stroke="#252d38" fill="none"/></pattern>
          <pattern id="major" x="89" y="281" width="25.500" height="25.500" patternUnits="userSpaceOnUse"><path d="M0 .5h25.500M.5 0v25.500" stroke="#2c3540" fill="none"/></pattern>
        </defs>
        <rect width="100%" height="100%" fill="url(#minor)"/>
        <rect width="100%" height="100%" fill="url(#major)"/>
        <line x1="89.500" y1="0" x2="89.500" y2="242" stroke="#22482c"/>
        <line x1="129" y1="281.500" x2="100%" y2="281.500" stroke="#54232c"/>
        <g fill="none" stroke="#b9bcbf">
          <path d="M89.500 242v36M93 281.500h37" stroke="#c5c6c4"/>
          <path d="M86.500 278.500h6v6h-6zM90 230l5 5 5-5M95 235v6M131 271l9 9M140 271l-9 9"/>
          <path d="M338.500 103v119M440.500 103v119M317 120.500h124M317 222.500h124M338 103.500h103M318.500 120v102"/>
        </g>
        <path d="m339 103.500 5-1.500v3zM440 103.500l-5-1.500v3zM318.500 121l-1.500 5h3zM318.500 222l-1.500-5h3z" fill="#fff"/>
        <text x="389" y="104" text-anchor="middle">1000</text>
        <text x="318" y="171" text-anchor="middle" transform="rotate(-90 318 171)">1000</text>
        <g stroke="#c4c6c7">
          <line x1="0" y1="187.500" x2="441" y2="187.500"/><line x1="462" y1="187.500" x2="100%" y2="187.500"/>
          <line x1="451.500" y1="0" x2="451.500" y2="177"/><line x1="451.500" y1="198" x2="451.500" y2="100%"/>
          <rect x="441.500" y="177.500" width="20" height="20" fill="none"/>
        </g>
      </svg>
      <span class="viewlabel">[−][俯视][二维线框]</span>
      <div class="compass"><span class="n">北</span><span class="w">西</span><button class="face">上</button><span class="e">东</span><span class="s">南</span></div>
      <button class="wcs">WCS<svg class="s6"><use href="#down"/></svg></button>
    </div>
    <div class="vscroll"><svg class="s8 up"><use href="#chev"/></svg><b></b><svg class="s8"><use href="#chev"/></svg></div>
    <div class="hscroll"><svg class="s8 left"><use href="#chev"/></svg><b></b><svg class="s8 right"><use href="#chev"/></svg></div>
  </section>
  <div class="side rightside">
    <button aria-label="删除"><svg><use href="#erase"/></svg></button><button aria-label="复制对象"><svg><use href="#mcopy"/></svg></button><button aria-label="镜像"><svg><use href="#mirror"/></svg></button><button aria-label="偏移"><svg><use href="#offset"/></svg></button><button aria-label="阵列"><svg><use href="#array"/></svg></button><button aria-label="移动"><svg><use href="#move"/></svg></button><button aria-label="旋转"><svg><use href="#rotate"/></svg></button><button aria-label="缩放"><svg><use href="#scale"/></svg></button><button aria-label="拉伸"><svg><use href="#stretch"/></svg></button><button aria-label="修剪"><svg><use href="#trim"/></svg></button><button aria-label="延伸"><svg><use href="#extend"/></svg></button><button aria-label="打断于点"><svg><use href="#breakpt"/></svg></button><button aria-label="打断"><svg><use href="#break"/></svg></button><button aria-label="合并"><svg><use href="#join"/></svg></button><button aria-label="倒角"><svg><use href="#chamfer"/></svg></button><button aria-label="圆角"><svg><use href="#fillet"/></svg></button><button aria-label="光顺曲线"><svg><use href="#blend"/></svg></button><button aria-label="分解"><svg><use href="#explode"/></svg></button>
  </div>
</main>

<section class="command">
  <div class="cmdgrip"><button aria-label="关闭命令行"><svg><use href="#closeb"/></svg></button><button aria-label="命令行设置"><svg><use href="#wrench"/></svg></button></div>
  <p class="history">ERASE <span>找到</span> 1 <span>个</span></p>
  <div class="entry"><button aria-label="最近使用的命令"><svg><use href="#prompt"/></svg><svg class="s6"><use href="#down"/></svg></button><input type="text" aria-label="命令" placeholder="键入命令"></div>
</section>

<div class="layouts">
  <button class="ltab on">模型</button><button class="ltab">布局1</button><button class="ltab">布局2</button><button class="ltab add" aria-label="新建布局"><svg class="s8"><use href="#plus"/></svg></button>
</div>

<footer class="status">
  <div class="cell coords">3547.4732, 921.8195, 0.0000</div>
  <div class="cell model"><button class="txt">模型</button></div>
  <div class="cell end"><button class="lit" aria-label="栅格"><svg><use href="#sgrid"/></svg></button><button aria-label="捕捉"><svg><use href="#sdots"/></svg></button><button class="drop" aria-label="捕捉选项"><svg><use href="#down"/></svg></button></div>
  <div class="cell lit"><button aria-label="推断约束"><svg><use href="#infer"/></svg></button></div>
  <div class="cell lit"><button aria-label="动态输入"><svg><use href="#dyn"/></svg></button></div>
  <div class="cell"><button class="lit" aria-label="正交"><svg><use href="#ortho"/></svg></button><button aria-label="极轴追踪"><svg><use href="#polar"/></svg></button><button class="drop" aria-label="极轴选项"><svg><use href="#down"/></svg></button><button aria-label="等轴测"><svg><use href="#iso"/></svg></button><button class="drop" aria-label="等轴测选项"><svg><use href="#down"/></svg></button></div>
  <div class="cell"><button aria-label="对象追踪"><svg><use href="#otrack"/></svg></button><button class="lit" aria-label="对象捕捉"><svg><use href="#osnap"/></svg></button><button class="drop" aria-label="对象捕捉选项"><svg><use href="#down"/></svg></button></div>
  <div class="cell"><button class="lite" aria-label="线宽显示"><svg><use href="#lwt"/></svg></button></div>
  <div class="cell"><button aria-label="透明度"><svg><use href="#trans"/></svg></button></div>
  <div class="cell"><button aria-label="选择循环"><svg><use href="#cycle"/></svg></button></div>
  <div class="cell end"><button aria-label="三维捕捉"><svg><use href="#cubesnap"/></svg></button><button class="drop" aria-label="三维捕捉选项"><svg><use href="#down"/></svg></button></div>
  <div class="cell end"><button class="lit" aria-label="动态 UCS"><svg><use href="#ducs"/></svg></button><button aria-label="选择过滤"><svg><use href="#cube"/></svg></button><button class="drop" aria-label="过滤选项"><svg><use href="#down"/></svg></button><button aria-label="小控件"><svg><use href="#gizmo"/></svg></button><button class="drop" aria-label="小控件选项"><svg><use href="#down"/></svg></button></div>
  <div class="cell end"><button class="lit" aria-label="注释可见性"><svg><use href="#annvis"/></svg></button><button class="lite" aria-label="自动缩放"><svg><use href="#annauto"/></svg></button><button class="lite" aria-label="注释比例"><svg><use href="#ann"/></svg></button><button class="txt scale">1:1 / 100%<svg class="s8"><use href="#down"/></svg></button></div>
  <div class="cell"><button class="lite" aria-label="切换工作空间"><svg><use href="#gear"/></svg></button><button class="drop" aria-label="工作空间选项"><svg><use href="#down"/></svg></button></div>
  <div class="cell end"><button class="lite" aria-label="注释监视器"><svg><use href="#plus"/></svg></button></div>
  <div class="cell units"><button aria-label="单位图标"><svg><use href="#ruler"/></svg></button><button class="txt">小数</button><button class="drop" aria-label="单位选项"><svg><use href="#down"/></svg></button></div>
  <div class="cell end"><button aria-label="快捷特性"><svg><use href="#quick"/></svg></button></div>
  <div class="cell"><button class="lit" aria-label="锁定用户界面"><svg><use href="#lockui"/></svg></button><button class="drop" aria-label="锁定选项"><svg><use href="#down"/></svg></button></div>
  <div class="cell"><button aria-label="隔离对象"><svg><use href="#isolate"/></svg></button></div>
  <div class="cell end"><button aria-label="硬件加速"><svg><use href="#perf"/></svg></button></div>
  <div class="cell last"><button class="lite" aria-label="全屏显示"><svg><use href="#clean"/></svg></button><button class="lite" aria-label="自定义"><svg><use href="#menu"/></svg></button></div>
</footer>

<div class="watermark">
  <div class="brand"><span class="bai">Bai</span><span class="paw"><svg viewBox="0 0 52 58"><g fill="#ededed" fill-opacity=".92" stroke="#c5c5c5"><ellipse cx="7" cy="22" rx="6" ry="8"/><ellipse cx="19" cy="10" rx="6" ry="9"/><ellipse cx="35" cy="10" rx="6" ry="9"/><ellipse cx="46" cy="26" rx="6" ry="8"/><path d="M26 24c7 0 9 8 14 12 12 9 9 20 0 21-6 1-9-1-14-1s-8 2-14 1C2 56-1 44 11 36c6-4 8-12 15-12z"/></g></svg><b>du</b></span><span class="jy">经验</span></div>
  <div class="site">jingyan.baidu.com</div>
</div>
</body>
</html>
```

FILE: styles.css
```css
* { box-sizing: border-box; }

body {
  margin: 0;
  min-height: 100vh;
  display: flex;
  flex-direction: column;
  position: relative;
  overflow: hidden;
  background: #5c5c5c;
  color: #ddd;
  font: 10px/14px "Open Sans", "Noto Sans CJK SC", sans-serif;
}

.sprite { position: absolute; width: 0; height: 0; }

button {
  display: flex;
  align-items: center;
  justify-content: center;
  margin: 0;
  padding: 0;
  border: 0;
  background: none;
  color: inherit;
  font: inherit;
  white-space: nowrap;
}

svg { flex: none; width: 12px; height: 12px; }
.s6 { width: 6px; height: 6px; }
.s8 { width: 8px; height: 8px; }
.lite { color: #d9dbe0; }
.lit { color: #2b8df5; }
.drop { width: 10px; color: #eee; }
.drop svg { width: 5px; height: 5px; }

/* Title bar and menus */
.head {
  display: grid;
  grid-template-columns: 31px 1fr;
  grid-template-rows: 18px 16px;
}

.logo {
  grid-row: span 2;
  gap: 2px;
  margin-bottom: 3px;
  border: 1px solid #383838;
  border-width: 0 1px 1px 0;
  background: linear-gradient(#999, #5b5b5b);
  color: #222;
}
.logo-a { width: 20px; height: 22px; }
.logo .s6 { width: 5px; }

.titlebar { display: flex; background: #fff; }

.quick {
  display: flex;
  width: 167px;
  padding-left: 4px;
  background: linear-gradient(#a4a4a4, #848484);
}
.quick button { width: 19px; }
.quick .drop { width: 8px; }
.quick .dim { color: #a9a9a9; }
.quick .tail { width: 14px; }
.quick .tail svg { width: 9px; }

.title {
  flex: 1;
  display: flex;
  justify-content: center;
  gap: 11px;
  margin: 0;
  color: #222;
  font: 10px/18px "Noto Sans", sans-serif;
}

.info {
  display: flex;
  width: 336px;
  background: linear-gradient(#a4a4a4, #848484);
}
.expand { width: 12px; color: #fff; }
.search {
  width: 139px;
  padding: 0 3px;
  border: 1px solid #555;
  background: #727272;
  font: italic 9px/14px "Noto Sans CJK SC", sans-serif;
}
.search::placeholder { color: #c4c4c4; }
.ico { width: 20px; }
.login { gap: 3px; margin-right: 44px; font-size: 10px; color: #eee; }
.near { width: 4px; }
.more { width: 30px; padding-left: 16px; color: #111; font-size: 8px; }

.winctl { display: flex; width: 140px; padding-left: 30px; color: #aaa; }
.winctl button { flex: 1; }
.winctl svg { width: 10px; height: 10px; }

.menubar {
  display: flex;
  align-items: center;
  gap: 15px;
  padding-left: 9px;
  background: linear-gradient(#999, #555);
}
.menubar a { color: #eee; text-decoration: none; white-space: nowrap; }
.docctl { display: flex; gap: 2px; margin-left: auto; padding-right: 2px; color: #222; }
.docctl svg { width: 10px; height: 10px; }

/* Drawing file tabs */
.filetabs {
  display: flex;
  align-items: flex-end;
  height: 19px;
  padding-left: 14px;
  background: #373737;
}
.ftab {
  justify-content: flex-start;
  width: 102px;
  height: 17px;
  padding-left: 10px;
  background: linear-gradient(#505050, #474747);
  color: #a8a8a8;
  clip-path: polygon(0 100%, 3px 85%, 7px 18%, 12px 0, calc(100% - 12px) 0, calc(100% - 7px) 18%, calc(100% - 3px) 85%, 100% 100%);
}
.ftab.on {
  justify-content: space-between;
  margin-left: -8px;
  padding: 0 10px 0 12px;
  background: linear-gradient(#858585, #5c5c5c);
  color: #f2f2f2;
}
.ftab .s8 { color: #444; }
.fadd {
  width: 18px;
  height: 12px;
  margin: 0 0 2px 4px;
  border-radius: 3px 8px 8px 6px;
  background: #535353;
}

/* Toolbars */
.bars { position: relative; padding-top: 1px; border-top: 1px solid #656565; }
.barrow { display: flex; gap: 2px; }
.barrow + .barrow { margin-top: 1px; }
.bar {
  display: flex;
  align-items: stretch;
  height: 20px;
  padding-left: 6px;
  border: 1px solid #494949;
  border-left: 0;
}
.bar button { width: 18px; }
.bar .drop { width: 10px; }
.bar .dark { color: #333; }
.bar .grey { color: #999; }
.bar i { width: 1px; margin: 1px 1px 1px 2px; background: #4b4b4b; }
.styles { padding-left: 2px; border-left: 1px solid #494949; }
.styles button { width: 21px; }

.combo {
  display: grid;
  grid-template-columns: auto 1fr 14px;
  align-items: center;
  width: 94px;
  background: #e1e1e1;
  color: #222;
}
.combo select {
  grid-area: 1 / 2 / 2 / 4;
  width: 100%;
  height: 100%;
  padding: 0 14px 0 4px;
  border: 0;
  appearance: none;
  background: none;
  color: inherit;
  font: inherit;
}
.combo select.ind { padding-left: 15px; }
.combo > svg { grid-area: 1 / 3; width: 7px; height: 7px; color: #666; pointer-events: none; }
.work { width: 137px; font-size: 10px; }
.bar .work + button { width: 19px; }

.props { gap: 3px; font: 8px/14px "Liberation Mono", monospace; }
.props .combo { width: 125px; }
.props .color { width: 118px; }
.props .lweight { width: 98px; }
.props .plot { width: 93px; background: #c9c9c9; color: #888; }
.props .plot svg { color: #aaa; }
.swatch { width: 8px; height: 8px; margin-left: 4px; border: 1px solid #111; background: #fff; }
.swatch + select { padding-left: 3px; }
.rule { width: 47px; height: 1px; margin-left: 4px; background: #555; }
.lweight .rule { width: 27px; background: #222; }
.plot select { padding-left: 8px; opacity: 1; }
.layer { width: 234px; }
.flags { display: flex; align-items: center; gap: 1px; padding-left: 2px; }
.flags svg { width: 12px; height: 12px; }
.flags .swatch { margin-left: 2px; }
.layer select { padding-left: 2px; }
.thermo { position: absolute; top: 27px; right: 1px; width: 8px; height: 44px; }

/* Drawing area */
.work-area {
  flex: 1;
  display: grid;
  grid-template-columns: 21px 1fr 21px;
  border-top: 2px solid #454545;
}
.side {
  display: flex;
  flex-direction: column;
  justify-content: space-between;
  align-items: center;
  padding: 7px 3px 0 0;
  border-right: 2px solid #404040;
}
.side button { height: 17px; }
.side svg { width: 13px; height: 13px; }
.rightside { padding-right: 1px; border: 0 solid #404040; border-left-width: 1px; }

.view {
  display: grid;
  grid-template-columns: 1fr 13px;
  grid-template-rows: 1fr 13px;
  padding: 0 2px 2px 0;
  row-gap: 1px;
}
.canvas { position: relative; min-height: 300px; background: #212832; }
.drawing { position: absolute; inset: 0; width: 100%; height: 100%; }
.drawing text { fill: #ddd; font: 7px "Open Sans", sans-serif; }
.viewlabel { position: absolute; top: 2px; left: 2px; color: #d5d8da; }

.compass {
  position: absolute;
  top: 8px;
  right: 9px;
  display: grid;
  grid-template-columns: 16px 20px 16px;
  grid-template-rows: 16px 20px 16px;
  place-items: center;
  width: 52px;
  height: 52px;
  border-radius: 50%;
  background: radial-gradient(circle, transparent 19px, #444b56 20px, #444b56 25px, transparent 26px);
  color: #aeb1b1;
  font-size: 8px;
  line-height: 8px;
}
.compass .n, .compass .s { grid-column: 2; }
.compass .n { grid-row: 1; align-self: start; }
.compass .s { grid-row: 3; align-self: end; }
.compass .w, .compass .face, .compass .e { grid-row: 2; }
.compass .w { justify-self: start; }
.compass .e { justify-self: end; }
.face { width: 22px; height: 22px; border: 1px solid #ccc; background: #aaaeb2; color: #4c5866; font-size: 14px; }
.wcs {
  position: absolute;
  top: 72px;
  right: 18px;
  justify-content: space-between;
  width: 36px;
  height: 12px;
  padding: 0 4px 0 3px;
  border: 1px solid #b3b6c0;
  border-radius: 3px;
  background: #8a8e9b;
  color: #d0d3d9;
  font-size: 8px;
}
.wcs .s6 { width: 5px; color: #a2a6b1; }

.vscroll, .hscroll {
  display: flex;
  align-items: center;
  justify-content: space-between;
  background: #f0f0f0;
  color: #333;
}
.vscroll { flex-direction: column; padding: 3px 0; }
.vscroll b { width: 13px; height: 14px; margin: auto 0; background: #c0c0c0; }
.vscroll .up { margin-bottom: -46px; }
.hscroll { grid-column: 1 / 3; padding: 0 16px 0 3px; }
.hscroll b { width: 14px; height: 13px; background: #cdcdcd; }
.hscroll .left { margin-right: 284px; }
.up { transform: rotate(180deg); }
.left { transform: rotate(90deg); }
.right { transform: rotate(-90deg); }

/* Command line */
.command {
  display: grid;
  grid-template-columns: 17px 1fr;
  grid-template-rows: 20px 18px;
  border-bottom: 1px solid #999;
}
.cmdgrip {
  grid-row: span 2;
  display: flex;
  flex-direction: column;
  justify-content: space-between;
  align-items: center;
  padding: 10px 0 0;
  background: linear-gradient(90deg, #777, #484848);
}
.cmdgrip svg { width: 10px; height: 10px; }
.cmdgrip button { color: #fff; }
.history {
  margin: 0;
  padding: 4px 2px 0;
  background: #c7c7c7;
  color: #111;
  font: 9px/16px "DejaVu Sans Mono", "Noto Sans CJK SC", monospace;
}
.history span { font-size: 11px; }
.entry { display: flex; border-top: 1px solid #aaa; background: #fff; }
.entry button { gap: 2px; width: 26px; color: #888; }
.entry input {
  flex: 1;
  min-width: 0;
  padding: 0 4px;
  border: 0;
  background: none;
  font: italic 10px/14px "Noto Sans CJK SC", sans-serif;
}
.entry input::placeholder { color: #999; }

/* Layout tabs */
.layouts { display: flex; height: 16px; padding: 0 9px 2px; background: #373737; }
.ltab {
  width: 44px;
  margin-right: -1px;
  background: linear-gradient(#484848, #575757);
  color: #aaa;
  clip-path: polygon(0 0, 100% 0, calc(100% - 3px) 15%, calc(100% - 7px) 82%, calc(100% - 11px) 100%, 11px 100%, 7px 82%, 3px 15%);
}
.ltab.on { width: 36px; background: linear-gradient(#555, #8c8c8c); color: #fff; font-weight: 700; }
.ltab.add { width: 20px; margin-left: 2px; clip-path: none; border-radius: 2px 4px 10px 8px; }

/* Status bar */
.status {
  display: flex;
  height: 20px;
  padding-left: 51px;
  background: #373737;
  color: #999;
}
.cell {
  flex: none;
  display: flex;
  border: 1px solid #6b6b6b;
  border-width: 1px 0 0 1px;
  background: #4c4c4c;
}
.cell button { width: 19px; }
.cell .drop { width: 11px; }
.cell.end { border-right-width: 1px; margin-right: 1px; }
.cell.lit, .cell .lit { color: #2b8df5; }
.cell .lite { color: #ccc; }
.cell .txt { width: auto; color: #eee; font-size: 9px; font-weight: 600; }
.coords {
  align-items: center;
  justify-content: flex-end;
  width: 143px;
  margin-right: 1px;
  padding-right: 4px;
  border-right-width: 1px;
  color: #f2f2f2;
  font-size: 9px;
  font-weight: 600;
}
.model { padding: 0 2px; margin-right: 1px; border-right-width: 1px; }
.cell .scale { gap: 3px; padding: 0 3px 0 4px; font-size: 8px; }
.scale .s8 { width: 6px; }
.units { width: 78px; }
.units .drop { margin-left: auto; }
.cell.last { flex: 1; justify-content: space-around; }

/* Overlay mark */
.watermark {
  position: absolute;
  right: 54px;
  bottom: 20px;
  width: 178px;
  color: #eee;
  pointer-events: none;
}
.brand { display: flex; align-items: flex-end; height: 58px; }
.bai { color: #f3f3f3; font: 700 39px/40px "Liberation Sans", sans-serif; text-shadow: 0 0 2px #666; }
.paw { display: grid; place-items: end center; width: 52px; margin-bottom: 1px; }
.paw svg, .paw b { grid-area: 1 / 1; }
.paw svg { width: 52px; height: 58px; }
.paw b { color: #aaa; font: 700 25px/32px "Liberation Sans", sans-serif; }
.jy { margin-left: 4px; font: 700 30px/40px "Noto Sans CJK SC", sans-serif; text-shadow: 0 0 2px #666; }
.site { font: 20px/28px "Noto Sans", sans-serif; text-shadow: 0 0 2px #666; }
```
